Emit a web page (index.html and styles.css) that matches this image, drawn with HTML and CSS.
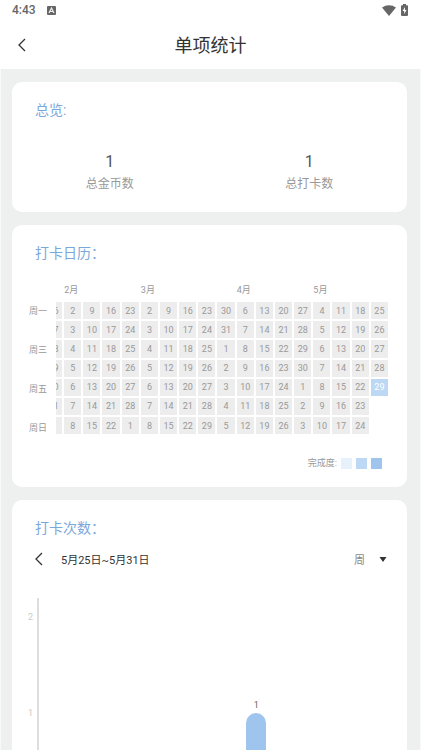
FILE: index.html
```html
<!DOCTYPE html>
<html lang="zh-CN">
<head>
<meta charset="utf-8">
<meta name="viewport" content="width=device-width, initial-scale=1">
<title>单项统计</title>
<link rel="stylesheet" href="styles.css">
</head>
<body>
<div class="app">
  <div class="status-bar">
    <span class="clock">4:43</span>
    <svg class="status-app" viewBox="0 0 9 9" aria-hidden="true"><rect width="9" height="9" rx="1" fill="#666"/><path d="M2 7 4.5 2 7 7M3 5.5h3" fill="none" stroke="#eee" stroke-width="1.2"/></svg>
    <svg class="wifi" viewBox="0 0 14 11" aria-hidden="true"><path d="M0 2.6C4 -.7 10 -.7 14 2.6L7 11z" fill="#666"/></svg>
    <svg class="battery" viewBox="0 0 7 12" aria-hidden="true"><path d="M2 0h3v1.2h1.2q.8 0 .8.8v9q0 1-1 1H1q-1 0-1-1V2q0-.8.8-.8H2z" fill="#666"/><path d="M4 3 1.6 7h1.6v3l2.3-4H4z" fill="#fff"/></svg>
  </div>
  <header class="nav">
    <button class="icon-button" type="button" aria-label="返回"><svg viewBox="0 0 8 14" aria-hidden="true"><path d="M7 1 1 7l6 6"/></svg></button>
    <h1>单项统计</h1>
  </header>
  <main class="content">
    <section class="card">
      <h2>总览:</h2>
      <dl class="totals">
        <div><dt>总金币数</dt><dd>1</dd></div>
        <div><dt>总打卡数</dt><dd>1</dd></div>
      </dl>
    </section>

    <section class="card">
      <h2>打卡日历：</h2>
      <div class="calendar">
        <div class="weekdays"><span>周一</span><span>周三</span><span>周五</span><span>周日</span></div>
        <div class="weeks">
          <table>
            <thead>
              <tr><td></td><th class="span-4" colspan="4">2月</th><th class="span-5" colspan="5">3月</th><th class="span-4" colspan="4">4月</th><th class="span-4" colspan="4">5月</th></tr>
            </thead>
            <tbody>
              <tr><td>26</td><td>2</td><td>9</td><td>16</td><td>23</td><td>2</td><td>9</td><td>16</td><td>23</td><td>30</td><td>6</td><td>13</td><td>20</td><td>27</td><td>4</td><td>11</td><td>18</td><td>25</td></tr>
              <tr><td>27</td><td>3</td><td>10</td><td>17</td><td>24</td><td>3</td><td>10</td><td>17</td><td>24</td><td>31</td><td>7</td><td>14</td><td>21</td><td>28</td><td>5</td><td>12</td><td>19</td><td>26</td></tr>
              <tr><td>28</td><td>4</td><td>11</td><td>18</td><td>25</td><td>4</td><td>11</td><td>18</td><td>25</td><td>1</td><td>8</td><td>15</td><td>22</td><td>29</td><td>6</td><td>13</td><td>20</td><td>27</td></tr>
              <tr><td>29</td><td>5</td><td>12</td><td>19</td><td>26</td><td>5</td><td>12</td><td>19</td><td>26</td><td>2</td><td>9</td><td>16</td><td>23</td><td>30</td><td>7</td><td>14</td><td>21</td><td>28</td></tr>
              <tr><td>30</td><td>6</td><td>13</td><td>20</td><td>27</td><td>6</td><td>13</td><td>20</td><td>27</td><td>3</td><td>10</td><td>17</td><td>24</td><td>1</td><td>8</td><td>15</td><td>22</td><td class="level-2">29</td></tr>
              <tr><td>31</td><td>7</td><td>14</td><td>21</td><td>28</td><td>7</td><td>14</td><td>21</td><td>28</td><td>4</td><td>11</td><td>18</td><td>25</td><td>2</td><td>9</td><td>16</td><td>23</td></tr>
              <tr><td>1</td><td>8</td><td>15</td><td>22</td><td>1</td><td>8</td><td>15</td><td>22</td><td>29</td><td>5</td><td>12</td><td>19</td><td>26</td><td>3</td><td>10</td><td>17</td><td>24</td></tr>
            </tbody>
          </table>
        </div>
      </div>
      <div class="legend"><span>完成度:</span><i class="level-1"></i><i class="level-2"></i><i class="level-3"></i></div>
    </section>

    <section class="card">
      <h2>打卡次数：</h2>
      <div class="range">
        <button class="icon-button" type="button" aria-label="上一周"><svg viewBox="0 0 8 14" aria-hidden="true"><path d="M7 1 1 7l6 6"/></svg></button>
        <span class="dates">5月25日~5月31日</span>
        <span class="period">
          <select aria-label="统计周期"><option>周</option></select>
          <svg viewBox="0 0 8 5" aria-hidden="true"><path d="M.5 0h7L4 5z" fill="#333"/></svg>
        </span>
      </div>
      <div class="chart">
        <div class="scale"><span>2</span><span>1</span></div>
        <div class="plot">
          <div class="slot"></div><div class="slot"></div><div class="slot"></div><div class="slot"></div>
          <div class="slot"><span>1</span><div class="bar"></div></div>
          <div class="slot"></div><div class="slot"></div>
        </div>
      </div>
    </section>
  </main>
</div>
</body>
</html>
```
FILE: styles.css
```css
* { box-sizing: border-box; }

body {
  margin: 0;
  background: #fff;
  color: #333;
  font-family: Roboto, "Noto Sans CJK SC", sans-serif;
}

h1, h2, dl, dd { margin: 0; font-weight: 400; }

button, select {
  padding: 0;
  border: 0;
  background: none;
  color: inherit;
  font: inherit;
}

.app {
  display: flex;
  flex-direction: column;
  height: 100vh;
}

.status-bar {
  display: flex;
  flex: none;
  align-items: center;
  height: 20px;
  padding: 0 13px 0 12px;
  color: #666;
  font-size: 12px;
  font-weight: 500;
}
.status-app { width: 9px; height: 9px; margin-left: 11px; }
.wifi { width: 14px; height: 11px; margin-left: auto; }
.battery { width: 7px; height: 12px; margin-left: 5px; }

.nav {
  display: grid;
  flex: none;
  grid-template-columns: 44px 1fr 44px;
  align-items: center;
  height: 49px;
}
.nav h1 { padding-top: 2px; font-size: 18px; line-height: 24px; text-align: center; }

.icon-button {
  display: flex;
  align-items: center;
  justify-content: center;
  height: 24px;
}
.icon-button svg {
  width: 8px;
  height: 14px;
  fill: none;
  stroke: #333;
  stroke-width: 1.3;
}

.content {
  display: flex;
  flex: 1;
  flex-direction: column;
  gap: 13px;
  min-height: 0;
  padding: 13px 13px 13px 11px;
  overflow-y: auto;
  scrollbar-width: none;
  background: #edf0ef;
  border: solid #f8f9f9;
  border-width: 0 1px;
}

.card {
  flex: none;
  padding: 16px 19px 16px 23px;
  background: #fff;
  border-radius: 10px;
}
.card h2 { color: #7ba7db; font-size: 14px; line-height: 24px; }

.totals {
  display: grid;
  grid-template-columns: 1fr 1fr;
  margin: 28px -21px 2px -25px;
  text-align: center;
}
.totals div { display: flex; flex-direction: column-reverse; }
.totals dt { color: #999; font-size: 12px; line-height: 20px; }
.totals dd { color: #555; font-size: 16px; line-height: 24px; }

.calendar {
  display: flex;
  align-items: flex-end;
  margin: 17px 0 0 -6px;
  color: #999;
  font-size: 9px;
}
.weekdays {
  display: flex;
  flex: none;
  flex-direction: column;
  justify-content: space-between;
  width: 27px;
  height: 132px;
  padding-top: 3px;
  line-height: 12px;
}
.weeks { flex: 1; min-width: 0; overflow: hidden; }
.weeks table { display: block; width: calc(100% + 11px); margin-left: -11px; }
.weeks thead { display: block; margin-bottom: 4px; }
.weeks tbody { display: grid; gap: 2px; }
.weeks tr { display: grid; grid-template-columns: repeat(18, 1fr); gap: 2px; }
.weeks td, .weeks th { display: block; padding: 0; }
.weeks th { font-weight: 400; line-height: 16px; text-align: left; }
.weeks tbody td {
  display: flex;
  align-items: center;
  justify-content: center;
  min-width: 0;
  aspect-ratio: 1;
  background: #ededed;
}
.span-4 { grid-column: span 4; }
.span-5 { grid-column: span 5; }

.level-1 { background: #e7f1fc; }
.level-2, .weeks tbody .level-2 { background: #bdd8f5; color: #fff; }
.level-3 { background: #9fc4ee; }

.legend {
  display: flex;
  align-items: center;
  justify-content: flex-end;
  gap: 4px;
  margin: 21px 6px 0 0;
  color: #999;
  font-size: 9px;
  line-height: 16px;
}
.legend i { width: 11px; height: 11px; }

.range {
  display: flex;
  align-items: center;
  height: 24px;
  margin-top: 7px;
  font-size: 11px;
}
.dates { margin-left: 18px; }
.period { display: flex; align-items: center; gap: 14px; margin-left: auto; padding-right: 1px; }
.period select { height: 24px; padding-top: 2px; appearance: none; color: #888; }
.period svg { width: 8px; height: 5px; }

.chart {
  display: flex;
  height: 212px;
  margin: 27px 11px 0 -7px;
}
.scale {
  display: flex;
  flex-direction: column;
  gap: 80px;
  width: 9px;
  padding-top: 11px;
  color: #ccc;
  font-size: 9px;
  line-height: 16px;
}
.plot { display: flex; flex: 1; border-left: 2px solid #ddd; }
.slot {
  display: flex;
  flex: 1;
  flex-direction: column;
  align-items: center;
  justify-content: flex-end;
  color: #666;
  font-size: 9px;
  line-height: 16px;
}
.bar { width: 20px; height: 97px; background: #9fc4ee; border-radius: 10px 10px 0 0; }
```
